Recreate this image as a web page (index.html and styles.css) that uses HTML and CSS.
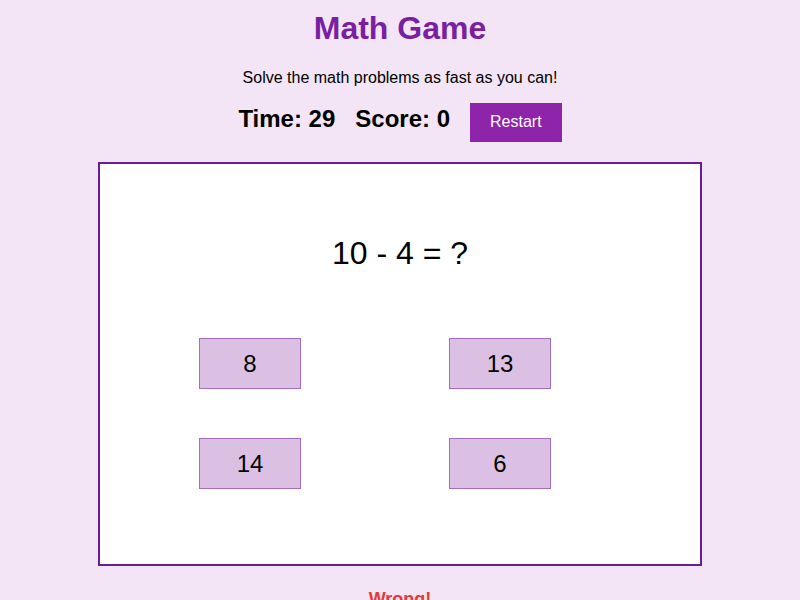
FILE: index.html
```html
<!DOCTYPE html>
<html lang="en">
<head>
<meta charset="utf-8">
<title>Math Game</title>
<link rel="stylesheet" href="styles.css">
</head>
<body>
  <h1 class="title">Math Game</h1>
  <p class="subtitle">Solve the math problems as fast as you can!</p>
  <div class="stats">
    <span class="stat">Time: 29</span>
    <span class="stat">Score: 0</span>
    <button class="restart">Restart</button>
  </div>
  <div class="game">
    <div class="question">10 - 4 = ?</div>
    <div class="options">
      <button class="option">8</button>
      <button class="option">13</button>
      <button class="option">14</button>
      <button class="option">6</button>
    </div>
  </div>
  <div class="feedback">Wrong!</div>
</body>
</html>
```
FILE: styles.css
```css
html, body {
  margin: 0;
  padding: 0;
}
body {
  background: #f3e5f5;
  font-family: "Liberation Sans", Arial, sans-serif;
  color: #000;
  text-align: center;
}
.title {
  margin: 10px 0 0;
  font-size: 32px;
  font-weight: bold;
  line-height: 36.8px;
  color: #7b1fa2;
}
.subtitle {
  margin: 22px 0 0;
  font-size: 16px;
  line-height: 18.4px;
}
.stats {
  margin-top: 16px;
  display: flex;
  justify-content: center;
  align-items: baseline;
  gap: 20px;
}
.stat {
  font-size: 24px;
  font-weight: bold;
  line-height: 27.6px;
}
.restart {
  font-family: "Liberation Sans", Arial, sans-serif;
  font-size: 16px;
  line-height: 18.4px;
  padding: 10px 20px;
  border: none;
  background: #8e24aa;
  color: #fff;
}
.game {
  width: 600px;
  height: 400px;
  margin: 20px auto 0;
  border: 2px solid #6a1b9a;
  background: #fff;
  box-sizing: content-box;
}
.question {
  margin-top: 71px;
  font-size: 32px;
  line-height: 36.8px;
}
.options {
  margin: 67px 0 0 25px;
  display: grid;
  grid-template-columns: 250px 250px;
  row-gap: 49px;
  justify-items: center;
}
.option {
  width: 102px;
  height: 51px;
  box-sizing: border-box;
  font-family: "Liberation Sans", Arial, sans-serif;
  font-size: 24px;
  background: #dcc0e4;
  border: 1px solid #a66bc4;
  color: #000;
  padding: 0;
}
.feedback {
  margin-top: 23px;
  font-size: 18px;
  font-weight: bold;
  color: #e53935;
}
```
